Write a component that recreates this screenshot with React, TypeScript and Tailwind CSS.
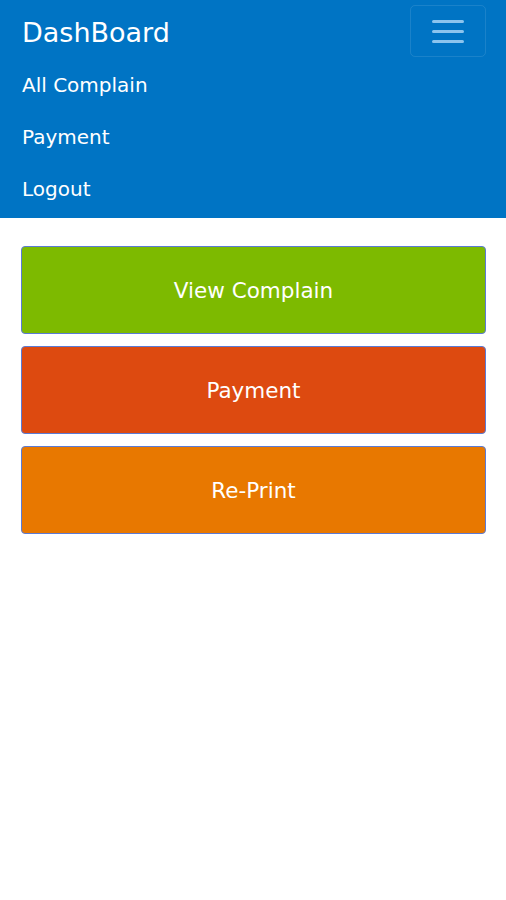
const LINKS = ['All Complain', 'Payment', 'Logout'];

const ACTIONS = [
  { label: 'View Complain', color: 'bg-[#7dba00]' },
  { label: 'Payment', color: 'bg-[#dd4a10]' },
  { label: 'Re-Print', color: 'bg-[#e87800]' },
];

export default function App() {
  return (
    <div className="min-h-[900px] bg-white font-['DejaVu_Sans',Verdana,sans-serif]">
      <nav className="bg-[#0074c4] pb-[3px] text-white">
        <div className="flex items-center justify-between pl-[22px] pr-[20px] pt-[5px]">
          <span className="pt-[2px] text-[27px] leading-none">DashBoard</span>
          <button className="flex h-[52px] w-[76px] flex-col items-center justify-center gap-[7px] rounded-[5px] border border-white/10">
            <span className="block h-[3px] w-[32px] rounded-full bg-[#8cc4ee]" />
            <span className="block h-[3px] w-[32px] rounded-full bg-[#8cc4ee]" />
            <span className="block h-[3px] w-[32px] rounded-full bg-[#8cc4ee]" />
          </button>
        </div>
        <ul className="mt-[2px] pl-[22px]">
          {LINKS.map(link => (
            <li key={link} className="flex h-[52px] items-center text-[20px]">
              {link}
            </li>
          ))}
        </ul>
      </nav>

      <div className="ml-[21px] mr-[20px] mt-[28px] flex flex-col gap-[12px]">
        {ACTIONS.map(a => (
          <button
            key={a.label}
            className={`${a.color} flex h-[88px] w-full items-center justify-center rounded-[4px] border border-[#5b7bd5] pt-[3px] text-[21.5px] text-white`}
          >
            {a.label}
          </button>
        ))}
      </div>
    </div>
  );
}
